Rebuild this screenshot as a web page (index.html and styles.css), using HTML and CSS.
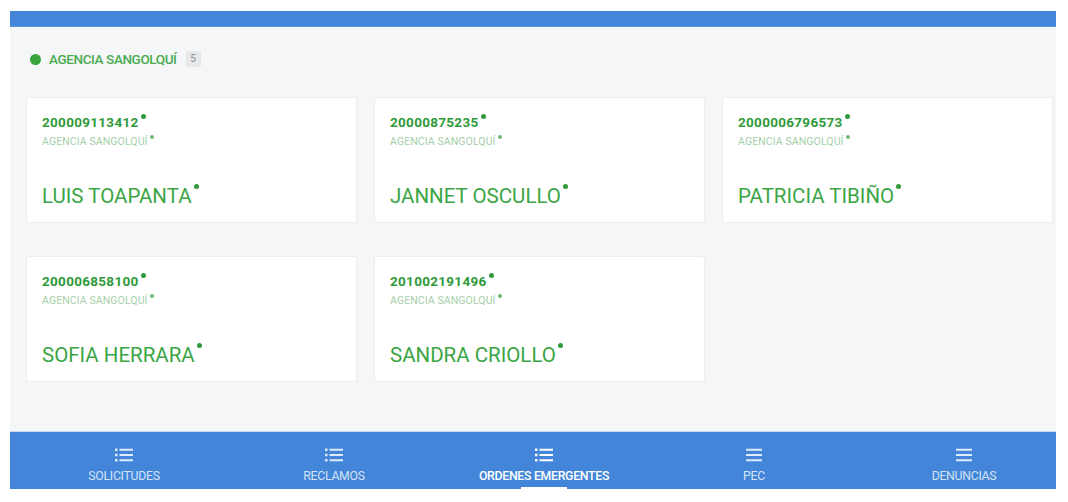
FILE: index.html
```html
<!DOCTYPE html>
<html lang="es">
<head>
    <meta charset="UTF-8">
    <meta name="viewport" content="width=device-width, initial-scale=1.0">
    <title>Ordenes Emergentes</title>
    <link rel="stylesheet" href="styles.css">
</head>
<body>
    <div class="app">
        <div class="topbar"></div>

        <main class="content">
            <div class="group-header">
                <span class="group-dot"></span>
                <span class="group-name">AGENCIA SANGOLQUÍ</span>
                <span class="group-count">5</span>
            </div>

            <div class="cards">
                <div class="card">
                    <div class="card-number">200009113412<span class="mark"></span></div>
                    <div class="card-agency">AGENCIA SANGOLQUÍ<span class="mark"></span></div>
                    <div class="card-name">LUIS TOAPANTA<span class="mark"></span></div>
                </div>
                <div class="card">
                    <div class="card-number">20000875235<span class="mark"></span></div>
                    <div class="card-agency">AGENCIA SANGOLQUÍ<span class="mark"></span></div>
                    <div class="card-name">JANNET OSCULLO<span class="mark"></span></div>
                </div>
                <div class="card">
                    <div class="card-number">2000006796573<span class="mark"></span></div>
                    <div class="card-agency">AGENCIA SANGOLQUÍ<span class="mark"></span></div>
                    <div class="card-name">PATRICIA TIBIÑO<span class="mark"></span></div>
                </div>
                <div class="card">
                    <div class="card-number">200006858100<span class="mark"></span></div>
                    <div class="card-agency">AGENCIA SANGOLQUÍ<span class="mark"></span></div>
                    <div class="card-name">SOFIA HERRARA<span class="mark"></span></div>
                </div>
                <div class="card">
                    <div class="card-number">201002191496<span class="mark"></span></div>
                    <div class="card-agency">AGENCIA SANGOLQUÍ<span class="mark"></span></div>
                    <div class="card-name">SANDRA CRIOLLO<span class="mark"></span></div>
                </div>
            </div>
        </main>

        <nav class="tabbar">
            <div class="tab">
                <svg class="tab-icon" viewBox="0 0 18 14"><rect x="0" y="0.5" width="2.5" height="2.5"/><rect x="0" y="5.75" width="2.5" height="2.5"/><rect x="0" y="11" width="2.5" height="2.5"/><rect x="4.5" y="0.75" width="13.5" height="2"/><rect x="4.5" y="6" width="13.5" height="2"/><rect x="4.5" y="11.25" width="13.5" height="2"/></svg>
                <span class="tab-label">SOLICITUDES</span>
            </div>
            <div class="tab">
                <svg class="tab-icon" viewBox="0 0 18 14"><rect x="0" y="0.5" width="2.5" height="2.5"/><rect x="0" y="5.75" width="2.5" height="2.5"/><rect x="0" y="11" width="2.5" height="2.5"/><rect x="4.5" y="0.75" width="13.5" height="2"/><rect x="4.5" y="6" width="13.5" height="2"/><rect x="4.5" y="11.25" width="13.5" height="2"/></svg>
                <span class="tab-label">RECLAMOS</span>
            </div>
            <div class="tab active">
                <svg class="tab-icon" viewBox="0 0 18 14"><rect x="0" y="0.5" width="2.5" height="2.5"/><rect x="0" y="5.75" width="2.5" height="2.5"/><rect x="0" y="11" width="2.5" height="2.5"/><rect x="4.5" y="0.75" width="13.5" height="2"/><rect x="4.5" y="6" width="13.5" height="2"/><rect x="4.5" y="11.25" width="13.5" height="2"/></svg>
                <span class="tab-label">ORDENES EMERGENTES</span>
            </div>
            <div class="tab">
                <svg class="tab-icon" viewBox="0 0 18 14"><rect x="1" y="0.75" width="16" height="2"/><rect x="1" y="6" width="16" height="2"/><rect x="1" y="11.25" width="16" height="2"/></svg>
                <span class="tab-label">PEC</span>
            </div>
            <div class="tab">
                <svg class="tab-icon" viewBox="0 0 18 14"><rect x="1" y="0.75" width="16" height="2"/><rect x="1" y="6" width="16" height="2"/><rect x="1" y="11.25" width="16" height="2"/></svg>
                <span class="tab-label">DENUNCIAS</span>
            </div>
        </nav>
    </div>
</body>
</html>
```

FILE: styles.css
```css
body {
    margin: 0;
    background: #ffffff;
    font-family: Roboto, "Liberation Sans", Arial, sans-serif;
}
.app {
    width: 1046px;
    margin: 11px 0 0 10px;
}
.topbar {
    height: 15px;
    background: #4386d9;
    border-bottom: 1px solid #5f95d8;
}
.content {
    height: 405px;
    background: #f4f6f8;
    padding: 0 0 0 16px;
    box-sizing: border-box;
    border-bottom: 1px solid #c9daf0;
}
.group-header {
    display: flex;
    align-items: center;
    height: 64px;
    padding-left: 4px;
}
.group-dot {
    width: 11px;
    height: 11px;
    border-radius: 50%;
    background: #3aa53e;
    margin-right: 8px;
}
.group-name {
    font-size: 13.5px;
    font-weight: 500;
    color: #4aab50;
    letter-spacing: -0.4px;
}
.group-count {
    margin-left: 9px;
    background: #e6e8ea;
    color: #8a8f94;
    font-size: 10px;
    width: 15px;
    height: 16px;
    line-height: 16px;
    text-align: center;
    border-radius: 2px;
}
.cards {
    display: grid;
    grid-template-columns: repeat(3, 331px);
    column-gap: 17px;
    row-gap: 33px;
    padding-top: 6px;
}
.card {
    height: 126px;
    background: #ffffff;
    border: 1px solid #eceef0;
    border-radius: 2px;
    box-sizing: border-box;
    padding: 16px 15px 0;
}
.card-number {
    font-size: 13.5px;
    font-weight: 700;
    color: #2f9a3a;
    letter-spacing: 0.3px;
}
.card-agency {
    margin-top: 5px;
    font-size: 10.5px;
    color: #a6cfa9;
    letter-spacing: 0.1px;
}
.card-name {
    margin-top: 36px;
    font-size: 20.5px;
    color: #3ba545;
}
.mark {
    display: inline-block;
    width: 5px;
    height: 5px;
    border-radius: 50%;
    background: #2f9a3a;
    vertical-align: top;
    margin-left: 2px;
}
.card-agency .mark {
    background: #6fbb76;
    width: 4px;
    height: 4px;
}
.tabbar {
    display: flex;
    height: 57px;
    padding-left: 9px;
    background: #4386d9;
    overflow: hidden;
}
.tab {
    flex: 0 0 210px;
    display: flex;
    flex-direction: column;
    align-items: center;
    padding-top: 16px;
    box-sizing: border-box;
    position: relative;
}
.tab-icon {
    width: 18px;
    height: 14px;
    fill: #dfeafa;
}
.tab-label {
    margin-top: 7px;
    font-size: 12.3px;
    color: #d3e2f6;
    letter-spacing: -0.3px;
}
.tab.active .tab-icon {
    fill: #ffffff;
}
.tab.active .tab-label {
    color: #ffffff;
    font-weight: 500;
}
.tab.active::after {
    content: "";
    position: absolute;
    bottom: 0;
    left: 50%;
    width: 46px;
    margin-left: -23px;
    height: 2px;
    background: #ffffff;
}
```
